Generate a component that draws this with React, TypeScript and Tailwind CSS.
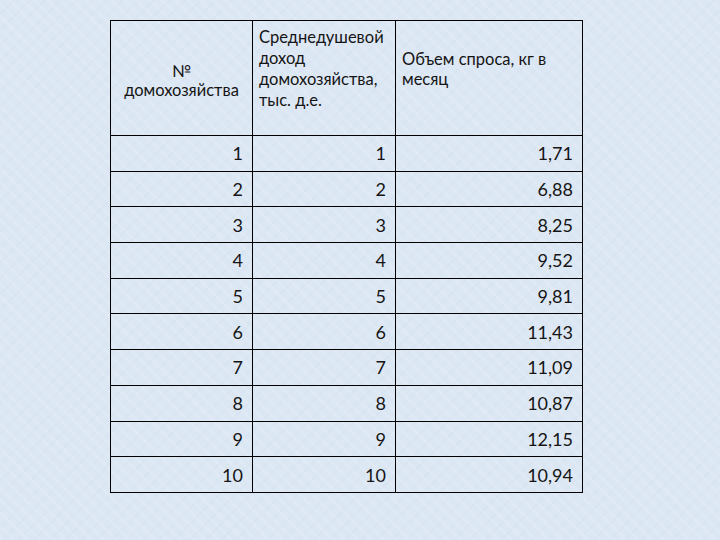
const rows: [string, string, string][] = [
  ["1", "1", "1,71"],
  ["2", "2", "6,88"],
  ["3", "3", "8,25"],
  ["4", "4", "9,52"],
  ["5", "5", "9,81"],
  ["6", "6", "11,43"],
  ["7", "7", "11,09"],
  ["8", "8", "10,87"],
  ["9", "9", "12,15"],
  ["10", "10", "10,94"],
];

export default function App() {
  return (
    <div
      className="w-[720px] h-[540px] overflow-hidden bg-[#dce7f4] pt-[20px] pl-[110px] text-[#151515]"
      style={{
        fontFamily: "Lato, 'Noto Sans', sans-serif",
        backgroundImage:
          "repeating-linear-gradient(45deg, rgba(255,255,255,0.1) 0 3px, transparent 3px 9px), repeating-linear-gradient(-45deg, rgba(190,205,228,0.1) 0 2px, transparent 2px 11px)",
      }}
    >
      <table className="border-collapse table-fixed w-[472px]">
        <colgroup>
          <col className="w-[142px]" />
          <col className="w-[143px]" />
          <col className="w-[187px]" />
        </colgroup>
        <thead>
          <tr className="h-[115px]">
            <th className="border border-black font-normal text-[16.5px] leading-[19px] text-center align-middle pt-[6px]">
              №
              <br />
              домохозяйства
            </th>
            <th className="border border-black font-normal text-[16.5px] leading-[21px] text-left align-top pl-[6px] pt-[6px]">
              Среднедушевой
              <br />
              доход
              <br />
              домохозяйства,
              <br />
              тыс. д.е.
            </th>
            <th className="border border-black font-normal text-[16.5px] leading-[20px] text-left align-top pl-[6px] pt-[28px]">
              Объем спроса, кг в
              <br />
              месяц
            </th>
          </tr>
        </thead>
        <tbody>
          {rows.map((r, i) => (
            <tr key={i} className="h-[35.7px]">
              {r.map((c, j) => (
                <td
                  key={j}
                  className="border border-black text-right pr-[9px] text-[18px] leading-none align-middle"
                >
                  {c}
                </td>
              ))}
            </tr>
          ))}
        </tbody>
      </table>
    </div>
  );
}
